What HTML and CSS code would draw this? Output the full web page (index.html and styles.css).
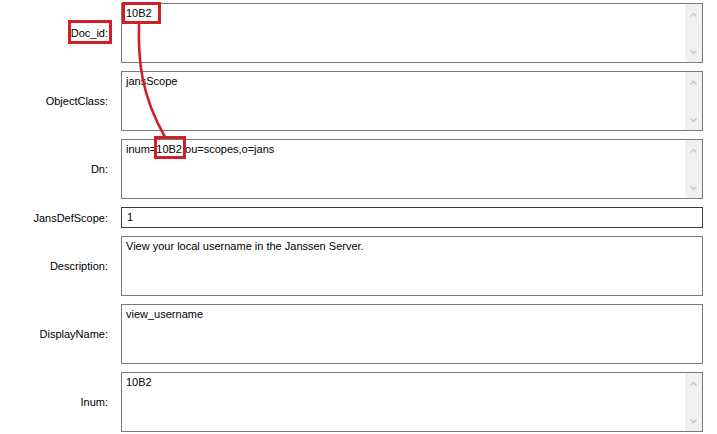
FILE: index.html
```html
<!DOCTYPE html>
<html lang="en">
<head>
<meta charset="UTF-8">
<title>Scope entry</title>
<link rel="stylesheet" href="styles.css">
</head>
<body>
<div class="page">
  <div class="form">
    <div class="label">Doc_id:</div>
    <div class="field">
      <div class="text">10B2</div>
      <div class="scrollbar">
        <svg width="9" height="6" viewBox="0 0 9 6"><path d="M1.5 4.5 L4.5 1.5 L7.5 4.5" fill="none" stroke="#c8c8c8" stroke-width="1.4"/></svg>
        <svg width="9" height="6" viewBox="0 0 9 6"><path d="M1.5 1.5 L4.5 4.5 L7.5 1.5" fill="none" stroke="#c8c8c8" stroke-width="1.4"/></svg>
      </div>
    </div>

    <div class="label">ObjectClass:</div>
    <div class="field">
      <div class="text">jansScope</div>
      <div class="scrollbar">
        <svg width="9" height="6" viewBox="0 0 9 6"><path d="M1.5 4.5 L4.5 1.5 L7.5 4.5" fill="none" stroke="#c8c8c8" stroke-width="1.4"/></svg>
        <svg width="9" height="6" viewBox="0 0 9 6"><path d="M1.5 1.5 L4.5 4.5 L7.5 1.5" fill="none" stroke="#c8c8c8" stroke-width="1.4"/></svg>
      </div>
    </div>

    <div class="label">Dn:</div>
    <div class="field">
      <div class="text">inum=10B2,ou=scopes,o=jans</div>
      <div class="scrollbar">
        <svg width="9" height="6" viewBox="0 0 9 6"><path d="M1.5 4.5 L4.5 1.5 L7.5 4.5" fill="none" stroke="#c8c8c8" stroke-width="1.4"/></svg>
        <svg width="9" height="6" viewBox="0 0 9 6"><path d="M1.5 1.5 L4.5 4.5 L7.5 1.5" fill="none" stroke="#c8c8c8" stroke-width="1.4"/></svg>
      </div>
    </div>

    <div class="label">JansDefScope:</div>
    <div class="field single">
      <div class="text">1</div>
    </div>

    <div class="label">Description:</div>
    <div class="field">
      <div class="text">View your local username in the Janssen Server.</div>
    </div>

    <div class="label">DisplayName:</div>
    <div class="field">
      <div class="text">view_username</div>
    </div>

    <div class="label">Inum:</div>
    <div class="field">
      <div class="text">10B2</div>
      <div class="scrollbar">
        <svg width="9" height="6" viewBox="0 0 9 6"><path d="M1.5 4.5 L4.5 1.5 L7.5 4.5" fill="none" stroke="#c8c8c8" stroke-width="1.4"/></svg>
        <svg width="9" height="6" viewBox="0 0 9 6"><path d="M1.5 1.5 L4.5 4.5 L7.5 1.5" fill="none" stroke="#c8c8c8" stroke-width="1.4"/></svg>
      </div>
    </div>
  </div>

  <!-- red markup over the form -->
  <svg class="markup" width="717" height="434" viewBox="0 0 717 434">
    <g fill="none" stroke="#d21f27" stroke-width="3">
      <rect x="69.5" y="21.5" width="41" height="21"/>
      <rect x="123.5" y="3.5" width="36" height="19"/>
      <rect x="155.5" y="137.5" width="29" height="20"/>
      <path d="M139 24 C 138 60, 141 95, 165 137" stroke-width="2.6"/>
    </g>
  </svg>
</div>
</body>
</html>
```

FILE: styles.css
```css
body, html {
  margin: 0;
  padding: 0;
  background-color: #ffffff;
}

.page {
  position: relative;
  width: 717px;
  height: 434px;
  overflow: hidden;
  font-family: "Liberation Sans", Arial, sans-serif;
  font-size: 11px;
  color: #000000;
}

.form {
  display: grid;
  grid-template-columns: 108px 582px;
  column-gap: 13px;
  row-gap: 8px;
  padding-top: 3px;
}

.label {
  text-align: right;
  align-self: center;
}

.field {
  display: flex;
  height: 60px;
  box-sizing: border-box;
  border: 1px solid #7a7a7a;
  background-color: #ffffff;
}

.field.single {
  height: 21px;
  border-color: #3c3c3c;
}

.field .text {
  flex: 1;
  padding: 3px 4px;
  line-height: 13px;
}

.field.single .text {
  padding: 3px 5px;
}

.scrollbar {
  width: 17px;
  background-color: #f0f0f0;
  display: flex;
  flex-direction: column;
  justify-content: space-between;
  align-items: center;
  padding: 8px 0 7px;
  box-sizing: border-box;
}

.scrollbar svg {
  display: block;
}

.markup {
  position: absolute;
  top: 0;
  left: 0;
  pointer-events: none;
}
```
